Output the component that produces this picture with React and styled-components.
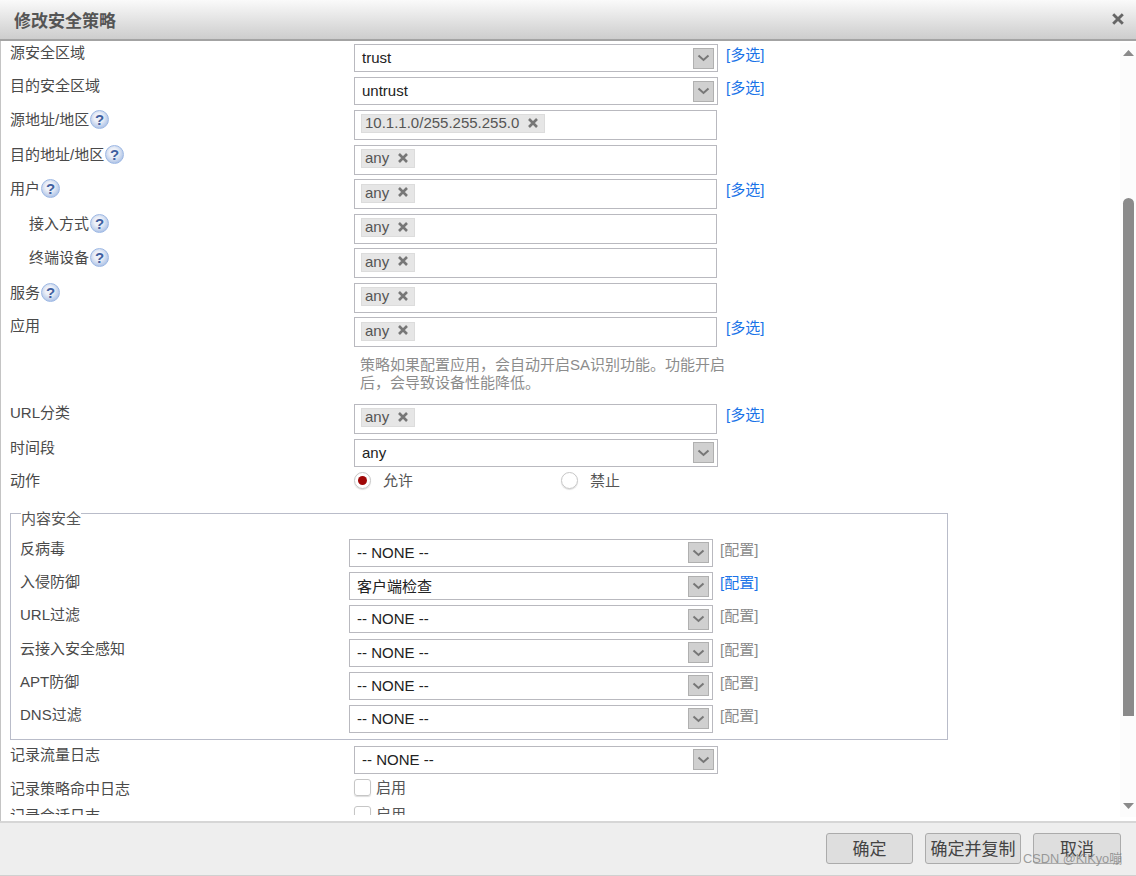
import React from "react";
import styled, { createGlobalStyle } from "styled-components";

const Global = createGlobalStyle`
  html, body { margin: 0; padding: 0; height: 100%; background: #fff; overflow: hidden; }
  body { font-family: "Liberation Sans", "Noto Sans CJK SC", sans-serif; font-size: 15px; color: #444; }
  * { box-sizing: border-box; }
`;

const Dialog = styled.div`
  width: 1136px;
  height: 876px;
  display: flex;
  flex-direction: column;
  position: relative;
  overflow: hidden;
`;
const Header = styled.header`
  height: 41px;
  flex: none;
  display: flex;
  align-items: center;
  justify-content: space-between;
  padding: 0 12px 1px 14px;
  background: linear-gradient(#fafafa, #cdcdcd);
  border-bottom: 2px solid #a3a3a3;
`;
const Title = styled.h1`
  margin: 0;
  font-size: 17px;
  font-weight: bold;
  color: #555;
`;
const Main = styled.div`
  height: 780px;
  flex: none;
  display: flex;
  border-left: 1px solid #c4c4c4;
  overflow: hidden;
`;
const Form = styled.form`
  flex: 1;
  height: 774px;
  padding: 3px 0 0 9px;
  overflow: hidden;
`;
const Row = styled.div`
  display: flex;
  align-items: flex-start;
  height: ${(p) => p.$h}px;
`;
const Label = styled.div`
  width: ${(p) => p.$w || 344}px;
  flex: none;
  padding-left: ${(p) => p.$indent || 0}px;
  margin-top: ${(p) => (p.$up ? -1 : 0)}px;
  display: flex;
  align-items: center;
  height: 19px;
  line-height: 19px;
  white-space: nowrap;
  color: #4a4a4a;
`;
const Help = styled.span`
  width: 19px;
  height: 19px;
  margin-left: 1px;
  border-radius: 50%;
  flex: none;
  display: inline-flex;
  align-items: center;
  justify-content: center;
  font: bold 15px "Liberation Sans", sans-serif;
  color: #3f5f9f;
  background: radial-gradient(circle at 45% 40%, #eef1f8 30%, #bccdea 66%, #85a9e0);
  border: 1px solid #9db8e4;
`;
const SelectBox = styled.div`
  width: 364px;
  height: 28px;
  flex: none;
  display: flex;
  align-items: center;
  justify-content: space-between;
  padding: 0 3px 0 7px;
  border: 1px solid #b9b9bf;
  color: #222;
  white-space: nowrap;
`;
const SelectText = styled.span`
  margin-top: ${(p) => (p.$up ? -2 : -1)}px;
`;
const Arrow = styled.span`
  width: 21px;
  height: 21px;
  display: flex;
  align-items: center;
  justify-content: center;
  background: #d0d0d0;
  border: 1px solid #b0b0b0;
`;
const TagBox = styled.div`
  width: 363px;
  height: 30px;
  flex: none;
  display: flex;
  align-items: flex-start;
  padding: 3.1px 6px 3px;
  border: 1px solid #b9b9bf;
`;
const Tag = styled.span`
  height: 19px;
  display: flex;
  align-items: center;
  gap: 9px;
  padding: 0 6px 2px 3px;
  background: #e6e6e6;
  border: 1px solid #dcdcdc;
  color: #555;
  font-size: 15px;
`;
const More = styled.a`
  margin: 1px 0 0 ${(p) => p.$gap || 9}px;
  line-height: 19px;
  color: ${(p) => (p.$muted ? "#8a8a8a" : "#1a73e8")};
  white-space: nowrap;
`;
const Hint = styled.p`
  margin: 0 0 0 350px;
  width: 370px;
  height: 36px;
  font-size: 15px;
  line-height: 17.5px;
  color: #8c8c8c;
`;
const Spacer = styled.div`
  height: ${(p) => p.$h}px;
`;
const Radios = styled.div`
  display: flex;
  align-items: center;
  height: 20px;
`;
const RadioItem = styled.label`
  width: 207px;
  display: flex;
  align-items: center;
  gap: 12px;
  color: #555;
`;
const InlineText = styled.span`
  margin-top: -2px;
`;
const RadioDot = styled.span`
  width: 17px;
  height: 17px;
  border-radius: 50%;
  flex: none;
  display: flex;
  align-items: center;
  justify-content: center;
  border: 1px solid #c6c6c6;
  box-shadow: 0 1px 1px #ddd;
  &::after {
    content: "";
    width: 9px;
    height: 9px;
    border-radius: 50%;
    background: ${(p) => (p.$on ? "#a00808" : "transparent")};
  }
`;
const Field = styled.fieldset`
  width: 938px;
  height: 231px;
  margin: 0;
  padding: 0 0 0 9px;
  border: 1px solid #b9bcc9;
`;
const Legend = styled.legend`
  padding: 0;
  margin-left: 1px;
  height: 10px;
  line-height: 19px;
  font-size: 15px;
  color: #555;
`;
const FieldRows = styled.div`
  padding-top: 20px;
`;
const Check = styled.label`
  display: flex;
  align-items: center;
  gap: 5px;
  height: 17px;
  color: #555;
`;
const CheckBox = styled.span`
  width: 17px;
  height: 17px;
  flex: none;
  border: 1px solid #c6c6c6;
  border-radius: 3px;
  box-shadow: 0 1px 1px #ddd;
`;
const Scrollbar = styled.div`
  width: 16px;
  height: 774px;
  flex: none;
  margin-top: 2px;
  display: flex;
  flex-direction: column;
  align-items: center;
  background: #fcfcfc;
  padding: 7px 0 8px;
`;
const Thumb = styled.div`
  width: 11px;
  height: 518px;
  margin-top: 142px;
  border-radius: 6px 6px 0 0;
  background: #8a8a8a;
`;
const ArrowDown = styled.svg`
  margin-top: auto;
`;
const Footer = styled.footer`
  height: 55px;
  flex: none;
  display: flex;
  justify-content: flex-end;
  gap: 12px;
  padding: 10px 15px 0 0;
  background: #eeeeee;
  border-top: 2px solid #d6d6d6;
  border-bottom: 1px solid #d0d0d0;
`;
const Button = styled.button`
  width: ${(p) => p.$w}px;
  height: 31px;
  padding: 0 0 2px;
  font: 17px "Liberation Sans", "Noto Sans CJK SC", sans-serif;
  color: #444;
  background: #dedede;
  border: 1px solid #ababab;
  border-radius: 3px;
`;
const Watermark = styled.span`
  position: absolute;
  right: 14px;
  bottom: 9px;
  font-size: 12.8px;
  color: rgba(120, 120, 120, 0.7);
  white-space: nowrap;
`;

const Chevron = () => (
  <svg width="13" height="8" viewBox="0 0 13 8">
    <path d="M1.5 1.5 L6.5 6 L11.5 1.5" fill="none" stroke="#777" strokeWidth="2" />
  </svg>
);
const Close = ({ size = 10, color = "#777", w = 2.6 }) => (
  <svg width={size} height={size} viewBox="0 0 10 10">
    <path d="M1 1 L9 9 M9 1 L1 9" stroke={color} strokeWidth={w} />
  </svg>
);
const Select = ({ value, up }) => (
  <SelectBox>
    <SelectText $up={up}>{value}</SelectText>
    <Arrow><Chevron /></Arrow>
  </SelectBox>
);
const Tags = ({ value }) => (
  <TagBox>
    <Tag>
      {value}
      <Close />
    </Tag>
  </TagBox>
);
const contentRows = [
  ["反病毒", "-- NONE --", true],
  ["入侵防御", "客户端检查", false],
  ["URL过滤", "-- NONE --", true],
  ["云接入安全感知", "-- NONE --", true],
  ["APT防御", "-- NONE --", true],
  ["DNS过滤", "-- NONE --", true],
];

export default function App() {
  return (
    <Dialog>
      <Global />
      <Header>
        <Title>修改安全策略</Title>
        <Close size={12} color="#666" w={2.4} />
      </Header>
      <Main>
        <Form>
          <Row $h={33}><Label $up>源安全区域</Label><Select up value="trust" /><More $gap={8}>[多选]</More></Row>
          <Row $h={33}><Label $up>目的安全区域</Label><Select up value="untrust" /><More $gap={8}>[多选]</More></Row>
          <Row $h={35}><Label>源地址/地区<Help>?</Help></Label><Tags value="10.1.1.0/255.255.255.0" /></Row>
          <Row $h={34.45}><Label>目的地址/地区<Help>?</Help></Label><Tags value="any" /></Row>
          <Row $h={34.55}><Label>用户<Help>?</Help></Label><Tags value="any" /><More>[多选]</More></Row>
          <Row $h={34.45}><Label $indent={19}>接入方式<Help>?</Help></Label><Tags value="any" /></Row>
          <Row $h={34.55}><Label $indent={19}>终端设备<Help>?</Help></Label><Tags value="any" /></Row>
          <Row $h={34.45}><Label>服务<Help>?</Help></Label><Tags value="any" /></Row>
          <Row $h={39.05}><Label $up>应用</Label><Tags value="any" /><More>[多选]</More></Row>
          <Hint>策略如果配置应用，会自动开启SA识别功能。功能开启后，会导致设备性能降低。</Hint>
          <Spacer $h={11.5} />
          <Row $h={35}><Label $up>URL分类</Label><Tags value="any" /><More>[多选]</More></Row>
          <Row $h={32}><Label $up>时间段</Label><Select value="any" /></Row>
          <Row $h={38}>
            <Label>动作</Label>
            <Radios>
              <RadioItem><RadioDot $on /><InlineText>允许</InlineText></RadioItem>
              <RadioItem><RadioDot /><InlineText>禁止</InlineText></RadioItem>
            </Radios>
          </Row>
          <Field>
            <Legend>内容安全</Legend>
            <FieldRows>
              {contentRows.map(([name, value, muted]) => (
                <Row $h={33.2} key={name}>
                  <Label $w={329}>{name}</Label>
                  <Select value={value} />
                  <More $gap={7} $muted={muted}>[配置]</More>
                </Row>
              ))}
            </FieldRows>
          </Field>
          <Spacer $h={6} />
          <Row $h={33}><Label $up>记录流量日志</Label><Select value="-- NONE --" /></Row>
          <Row $h={27}><Label>记录策略命中日志</Label><Check><CheckBox /><InlineText>启用</InlineText></Check></Row>
          <Row $h={27}><Label>记录会话日志</Label><Check><CheckBox /><InlineText>启用</InlineText></Check></Row>
        </Form>
        <Scrollbar>
          <svg width="11" height="6" viewBox="0 0 11 6"><path d="M5.5 0 L11 6 H0 Z" fill="#8a8a8a" /></svg>
          <Thumb />
          <ArrowDown width="11" height="6" viewBox="0 0 11 6"><path d="M0 0 H11 L5.5 6 Z" fill="#8a8a8a" /></ArrowDown>
        </Scrollbar>
      </Main>
      <Footer>
        <Button $w={87}>确定</Button>
        <Button $w={96}>确定并复制</Button>
        <Button $w={88}>取消</Button>
      </Footer>
      <Watermark>CSDN @KiKyo嘣</Watermark>
    </Dialog>
  );
}
